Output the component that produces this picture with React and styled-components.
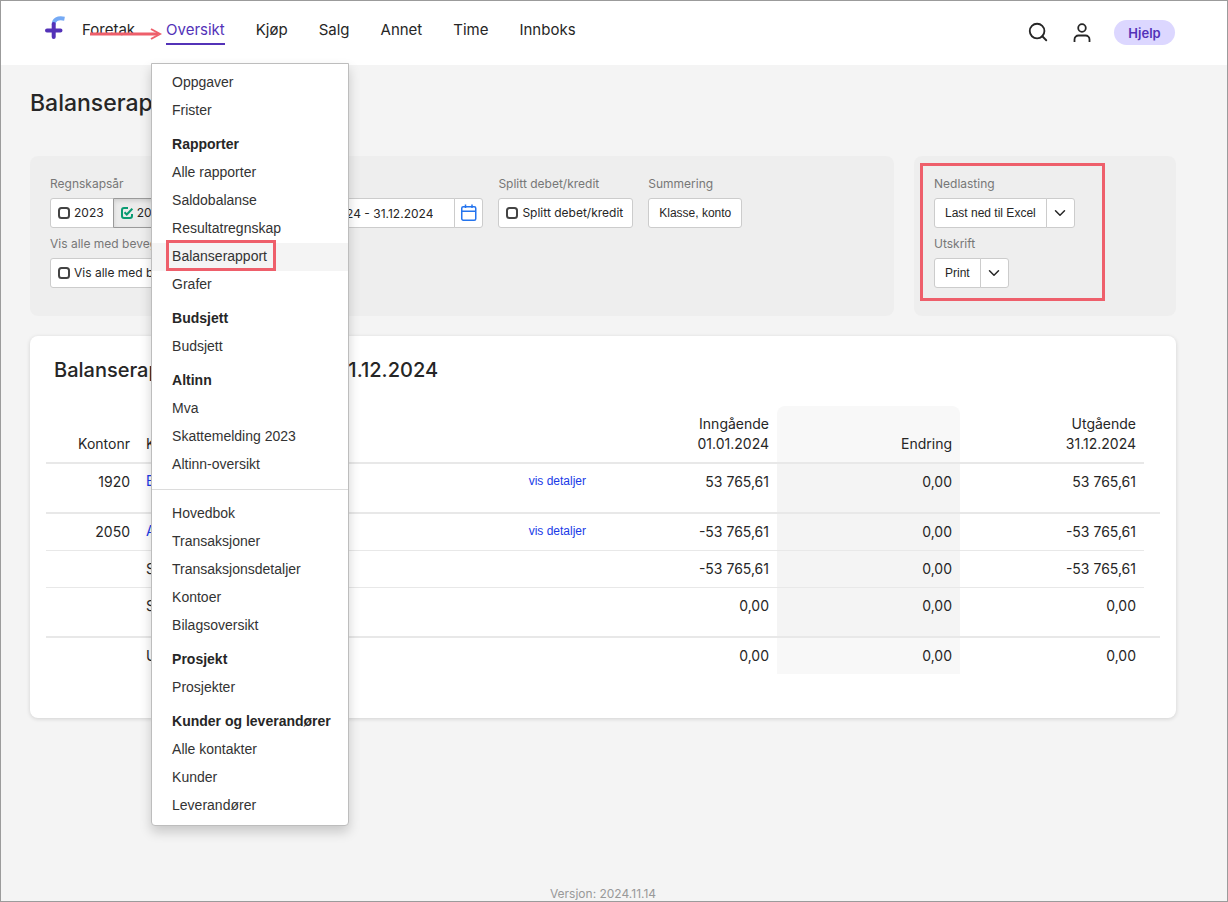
import React from "react";
import styled, { createGlobalStyle, css } from "styled-components";
import { Search, ChevronDown } from "lucide-react";

const GlobalStyle = createGlobalStyle`
  *,
  *:before,
  *:after {
    box-sizing: border-box;
  }

  body {
    margin: 0;
    font-family: Inter, "Liberation Sans", sans-serif;
    font-size: 14px;
    line-height: 20px;
    color: #262626;
    background: #f4f4f4;
  }

  button,
  input {
    font-family: inherit;
    color: inherit;
  }

  a {
    text-decoration: none;
  }
`;

const compactFont = css`
  font-family: "Liberation Sans", Arial, sans-serif;
`;

const Page = styled.div`
  display: flex;
  flex-direction: column;
  min-height: 100vh;
  border: 1px solid #9b9b9b;
`;

// header

const Header = styled.header`
  display: flex;
  align-items: flex-start;
  height: 64px;
  padding: 0 52px 0 43px;
  background: #fff;
`;

const LogoLink = styled.a`
  display: block;
  margin: 14px 16px 0 0;

  svg {
    display: block;
  }
`;

const Nav = styled.nav`
  display: flex;
  gap: 31px;
  margin-top: 17px;
`;

const NavItem = styled.div`
  position: relative;
`;

const NavLink = styled.a`
  display: block;
  height: 27px;
  font-size: 15px;
  line-height: 24px;
  color: #262626;

  ${({ $active }) =>
    $active &&
    css`
      color: #5332b8;
      border-bottom: 2px solid #5332b8;
    `}
`;

const Tools = styled.div`
  display: flex;
  gap: 20px;
  margin: 19px 0 0 auto;
`;

const IconButton = styled.button`
  display: flex;
  align-items: center;
  justify-content: center;
  width: 24px;
  height: 24px;
  padding: 0;
  border: 0;
  background: none;
`;

const HelpButton = styled.button`
  min-width: 61px;
  height: 25px;
  padding: 0 14px;
  border: 0;
  border-radius: 13px;
  background: #dcd7ff;
  color: #5332b8;
  font-size: 13px;
  font-weight: 600;
`;

// dropdown under the active nav item

const Menu = styled.div`
  position: absolute;
  top: 45px;
  left: -15px;
  z-index: 2;
  width: 198px;
  padding: 5px 0;
  background: #fff;
  border: 1px solid #bdbdbd;
  border-radius: 0 0 4px 4px;
  box-shadow: 0 6px 12px rgba(0, 0, 0, 0.18);
  ${compactFont}
`;

const MenuLink = styled.a`
  display: block;
  padding: 0 20px 2px;
  line-height: 26px;
  color: #333;
  background: ${({ $current }) => ($current ? "#f4f4f4" : "none")};
`;

const MenuTitle = styled.div`
  margin-top: 6px;
  padding: 0 20px 2px;
  font-weight: 700;
  line-height: 26px;
  white-space: nowrap;
`;

const MenuDivider = styled.hr`
  margin: 10px 0;
  border: 0;
  border-top: 1px solid #dcdcdc;
`;

// marks drawn over the page

const Mark = styled.div`
  position: absolute;
  border: 3px solid #ee5f6b;
  pointer-events: none;
`;

const MenuMark = styled(Mark)`
  top: -3px;
  left: 14px;
  width: 110px;
  height: 31px;
`;

const PanelMark = styled(Mark)`
  top: 7px;
  left: 6px;
  width: 185px;
  height: 138px;
`;

const Arrow = styled.svg`
  position: absolute;
  top: 9px;
  left: -77px;
  pointer-events: none;
`;

const Relative = styled.div`
  position: relative;
`;

// content

const Main = styled.main`
  padding: 22px 51px 0 29px;
`;

const Title = styled.h1`
  margin: 0 0 37px;
  font-size: 23px;
  font-weight: 500;
  line-height: 32px;
`;

const Panels = styled.div`
  display: grid;
  grid-template-columns: 1fr 262px;
  gap: 20px;
  margin-bottom: 20px;
`;

const Panel = styled.section`
  position: relative;
  display: flex;
  flex-direction: ${({ $column }) => ($column ? "column" : "row")};
  flex-wrap: wrap;
  align-content: flex-start;
  gap: 6px 15px;
  padding: 18px 20px 28px;
  border-radius: 8px;
  background: #eee;
`;

const FieldBox = styled.div`
  min-width: 0;
`;

const FieldLabel = styled.div`
  margin-bottom: 4px;
  font-size: 12px;
  line-height: 20px;
  color: #777;
`;

const Group = styled.div`
  display: flex;
  height: 30px;

  > * {
    border: 1px solid #ccc;
    background: #fff;
  }

  > * + * {
    margin-left: -1px;
  }

  > :first-child {
    border-radius: 3px 0 0 3px;
  }

  > :last-child {
    border-radius: 0 3px 3px 0;
  }

  > :only-child {
    border-radius: 3px;
  }
`;

const Button = styled.button`
  padding: 0 10px;
  font-size: 12px;
  ${compactFont}
`;

const SquareButton = styled.button`
  display: flex;
  align-items: center;
  justify-content: center;
  width: 29px;
  padding: 0;
`;

const PeriodInput = styled.input`
  width: 264px;
  padding: 0 21px;
  font-size: 12px;
  text-align: right;
`;

const CheckLabel = styled.label`
  position: relative;
  display: flex;
  align-items: center;
  gap: 4px;
  padding: 0 9px 0 7px;
  font-size: 12px;
  white-space: nowrap;

  input {
    position: absolute;
    margin: 0;
    opacity: 0;
  }

  ${({ $checked }) =>
    $checked &&
    css`
      && {
        border-color: #9a9a9a;
        background: #ebebeb;
        box-shadow: inset 0 2px 4px rgba(0, 0, 0, 0.12);
      }
    `}
`;

const Card = styled.section`
  padding: 20px 16px 44px;
  border-radius: 8px;
  background: #fff;
  box-shadow: 0 1px 4px rgba(0, 0, 0, 0.14);
`;

const CardTitle = styled.h2`
  margin: 0 8px 22px;
  font-size: 20px;
  font-weight: 500;
  line-height: 28px;
`;

const Table = styled.table`
  width: 100%;
  table-layout: fixed;
  border-spacing: 0;
`;

const Col = styled.col`
  width: ${({ $w }) => ($w ? $w + "px" : "auto")};
`;

const Th = styled.th`
  padding: 8px;
  border-bottom: 2px solid #e8e8e8;
  font-weight: 400;
  text-align: ${({ $left }) => ($left ? "left" : "right")};
  vertical-align: bottom;
  ${({ $tint }) => $tint && "background: #f8f8f8; border-radius: 8px 8px 0 0;"}
`;

const Td = styled.td`
  padding: 8px;
  text-align: ${({ $left }) => ($left ? "left" : "right")};
  vertical-align: top;
  white-space: nowrap;
  ${({ $tint }) => $tint && "background: #f4f4f4;"}
`;

const EdgeCell = styled.td`
  padding: 0;
`;

const Row = styled.tr`
  height: ${({ $tall }) => ($tall ? "50px" : "37px")};

  td {
    border-bottom: ${({ $tall }) => ($tall ? "2px" : "1px")} solid #e8e8e8;
  }

  ${EdgeCell} {
    ${({ $tall }) => !$tall && "border-bottom-color: transparent;"}
  }

  &:last-child {
    height: 36px;
  }

  &:last-child td {
    border-bottom: 0;
  }

  &:last-child ${Td}:nth-child(5) {
    background: #f8f8f8;
  }
`;

const RowLink = styled.a`
  color: #1a3ae8;
  line-height: 18px;
  vertical-align: top;
  ${({ $small }) =>
    $small &&
    css`
      font-size: 12px;
      ${compactFont}
    `}
`;

const Footer = styled.footer`
  margin: auto 51px 0 29px;
  font-size: 12px;
  line-height: 14px;
  text-align: center;
  color: #999;
`;

const Logo = () => (
  <svg width="22" height="26" viewBox="0 0 22 26" fill="none" strokeWidth="4">
    <path d="M9.700 9.500C9.700 4.500 13.500 2.400 20.500 3.700" stroke="#75aaf5" />
    <path d="M9.700 9V22M3 15.500H16.500" stroke="#5332b8" strokeLinecap="round" />
  </svg>
);

const PersonIcon = () => (
  <svg width="24" height="24" viewBox="0 0 24 24" fill="none" stroke="#262626" strokeWidth="1.800">
    <circle cx="12" cy="8" r="3.800" />
    <path d="M4.500 22v-2.500a4 4 0 0 1 4-4h7a4 4 0 0 1 4 4V22" />
  </svg>
);

const CalendarIcon = () => (
  <svg width="18" height="18" viewBox="0 0 18 18" fill="none" stroke="#2474ee" strokeWidth="1.500">
    <rect x="1.750" y="2.750" width="14" height="13.500" rx="1.500" />
    <path d="M2 7.250h14M5.500 .5v3.500M12 .5v3.500" />
  </svg>
);

const CheckIcon = ({ checked }) => (
  <svg width="12" height="12" viewBox="0 0 12 12" fill="none" strokeWidth="2">
    {checked ? (
      <g stroke="#0a9b72">
        <path d="M7 1H3a2 2 0 0 0-2 2v6a2 2 0 0 0 2 2h6a2 2 0 0 0 2-2V7" />
        <path d="M3.500 5.200L5.800 7.500L11.300 1.700" />
      </g>
    ) : (
      <rect x="1" y="1" width="10" height="10" rx="2.500" stroke="#444" />
    )}
  </svg>
);

const Field = ({ label, children }) => (
  <FieldBox role="group" aria-label={label}>
    <FieldLabel>{label}</FieldLabel>
    <Group>{children}</Group>
  </FieldBox>
);

const Check = ({ checked, children }) => (
  <CheckLabel $checked={checked}>
    <input type="checkbox" defaultChecked={checked} />
    <CheckIcon checked={checked} />
    {children}
  </CheckLabel>
);

const SplitButton = ({ children }) => (
  <>
    <Button type="button">{children}</Button>
    <SquareButton type="button" aria-label={children + ", flere valg"}>
      <ChevronDown size={18} strokeWidth={2} />
    </SquareButton>
  </>
);

const navItems = ["Foretak", "Oversikt", "Kjøp", "Salg", "Annet", "Time", "Innboks"];

const menuGroups = [
  { links: ["Oppgaver", "Frister"] },
  {
    title: "Rapporter",
    links: ["Alle rapporter", "Saldobalanse", "Resultatregnskap", "Balanserapport", "Grafer"],
  },
  { title: "Budsjett", links: ["Budsjett"] },
  { title: "Altinn", links: ["Mva", "Skattemelding 2023", "Altinn-oversikt"] },
  {
    divider: true,
    links: ["Hovedbok", "Transaksjoner", "Transaksjonsdetaljer", "Kontoer", "Bilagsoversikt"],
  },
  { title: "Prosjekt", links: ["Prosjekter"] },
  { title: "Kunder og leverandører", links: ["Alle kontakter", "Kunder", "Leverandører"] },
];

const rows = [
  { nr: "1920", name: "Bank", link: true, tall: true, values: ["53 765,61", "0,00", "53 765,61"] },
  { nr: "2050", name: "Annen", link: true, values: ["-53 765,61", "0,00", "-53 765,61"] },
  { name: "Sum", values: ["-53 765,61", "0,00", "-53 765,61"] },
  { name: "Sum", tall: true, values: ["0,00", "0,00", "0,00"] },
  { name: "Udisp.", values: ["0,00", "0,00", "0,00"] },
];

const OverviewMenu = () => (
  <Menu>
    {menuGroups.map((group, i) => (
      <React.Fragment key={i}>
        {group.divider && <MenuDivider />}
        {group.title && <MenuTitle>{group.title}</MenuTitle>}
        {group.links.map((link) => (
          <Relative key={link}>
            <MenuLink href="#" $current={link === "Balanserapport"}>
              {link}
            </MenuLink>
            {link === "Balanserapport" && <MenuMark />}
          </Relative>
        ))}
      </React.Fragment>
    ))}
  </Menu>
);

const App = () => {
  return (
    <>
      <GlobalStyle />
      <Page>
        <Header>
          <LogoLink href="#" aria-label="Forside">
            <Logo />
          </LogoLink>
          <Nav>
            {navItems.map((item) => (
              <NavItem key={item}>
                <NavLink href="#" $active={item === "Oversikt"}>
                  {item}
                </NavLink>
                {item === "Oversikt" && (
                  <>
                    <Arrow width="73" height="14" fill="none" stroke="#ee5f6b">
                      <path d="M1 7H69" strokeWidth="3" />
                      <path d="M62 2L71 7L62 12" strokeWidth="2" />
                    </Arrow>
                    <OverviewMenu />
                  </>
                )}
              </NavItem>
            ))}
          </Nav>
          <Tools>
            <IconButton type="button" aria-label="Søk">
              <Search size={22} strokeWidth={2} />
            </IconButton>
            <IconButton type="button" aria-label="Profil">
              <PersonIcon />
            </IconButton>
            <HelpButton type="button">Hjelp</HelpButton>
          </Tools>
        </Header>

        <Main>
          <Title>Balanserapport</Title>

          <Panels>
            <Panel>
              <Field label="Regnskapsår">
                <Check>2023</Check>
                <Check checked>2024</Check>
              </Field>
              <Field label="Periode">
                <PeriodInput aria-label="Periode" defaultValue="01.01.2024 - 31.12.2024" />
                <SquareButton type="button" aria-label="Velg periode">
                  <CalendarIcon />
                </SquareButton>
              </Field>
              <Field label="Splitt debet/kredit">
                <Check>Splitt debet/kredit</Check>
              </Field>
              <Field label="Summering">
                <Button type="button">Klasse, konto</Button>
              </Field>
              <Field label="Vis alle med bevegelse">
                <Check>Vis alle med bevegelse</Check>
              </Field>
            </Panel>

            <Panel $column>
              <Field label="Nedlasting">
                <SplitButton>Last ned til Excel</SplitButton>
              </Field>
              <Field label="Utskrift">
                <SplitButton>Print</SplitButton>
              </Field>
              <PanelMark />
            </Panel>
          </Panels>

          <Card>
            <CardTitle>Balanserapport: 01.01.2024 - 31.12.2024</CardTitle>
            <Table>
              <colgroup>
                <Col $w={92} />
                <Col />
                <Col $w={94} />
                <Col $w={183} />
                <Col $w={183} />
                <Col $w={184} />
                <Col $w={16} />
              </colgroup>
              <thead>
                <tr>
                  <Th>Kontonr</Th>
                  <Th $left colSpan={2}>
                    Konto
                  </Th>
                  <Th>
                    Inngående
                    <br />
                    01.01.2024
                  </Th>
                  <Th $tint>Endring</Th>
                  <Th>
                    Utgående
                    <br />
                    31.12.2024
                  </Th>
                  <EdgeCell />
                </tr>
              </thead>
              <tbody>
                {rows.map((row, r) => (
                  <Row key={r} $tall={row.tall}>
                    <Td>{row.nr}</Td>
                    <Td $left>{row.link ? <RowLink href="#">{row.name}</RowLink> : row.name}</Td>
                    <Td>
                      {row.link && (
                        <RowLink href="#" $small>
                          vis detaljer
                        </RowLink>
                      )}
                    </Td>
                    {row.values.map((value, i) => (
                      <Td key={i} $tint={i === 1}>
                        {value}
                      </Td>
                    ))}
                    <EdgeCell />
                  </Row>
                ))}
              </tbody>
            </Table>
          </Card>
        </Main>

        <Footer>Versjon: 2024.11.14</Footer>
      </Page>
    </>
  );
};

export default App;
